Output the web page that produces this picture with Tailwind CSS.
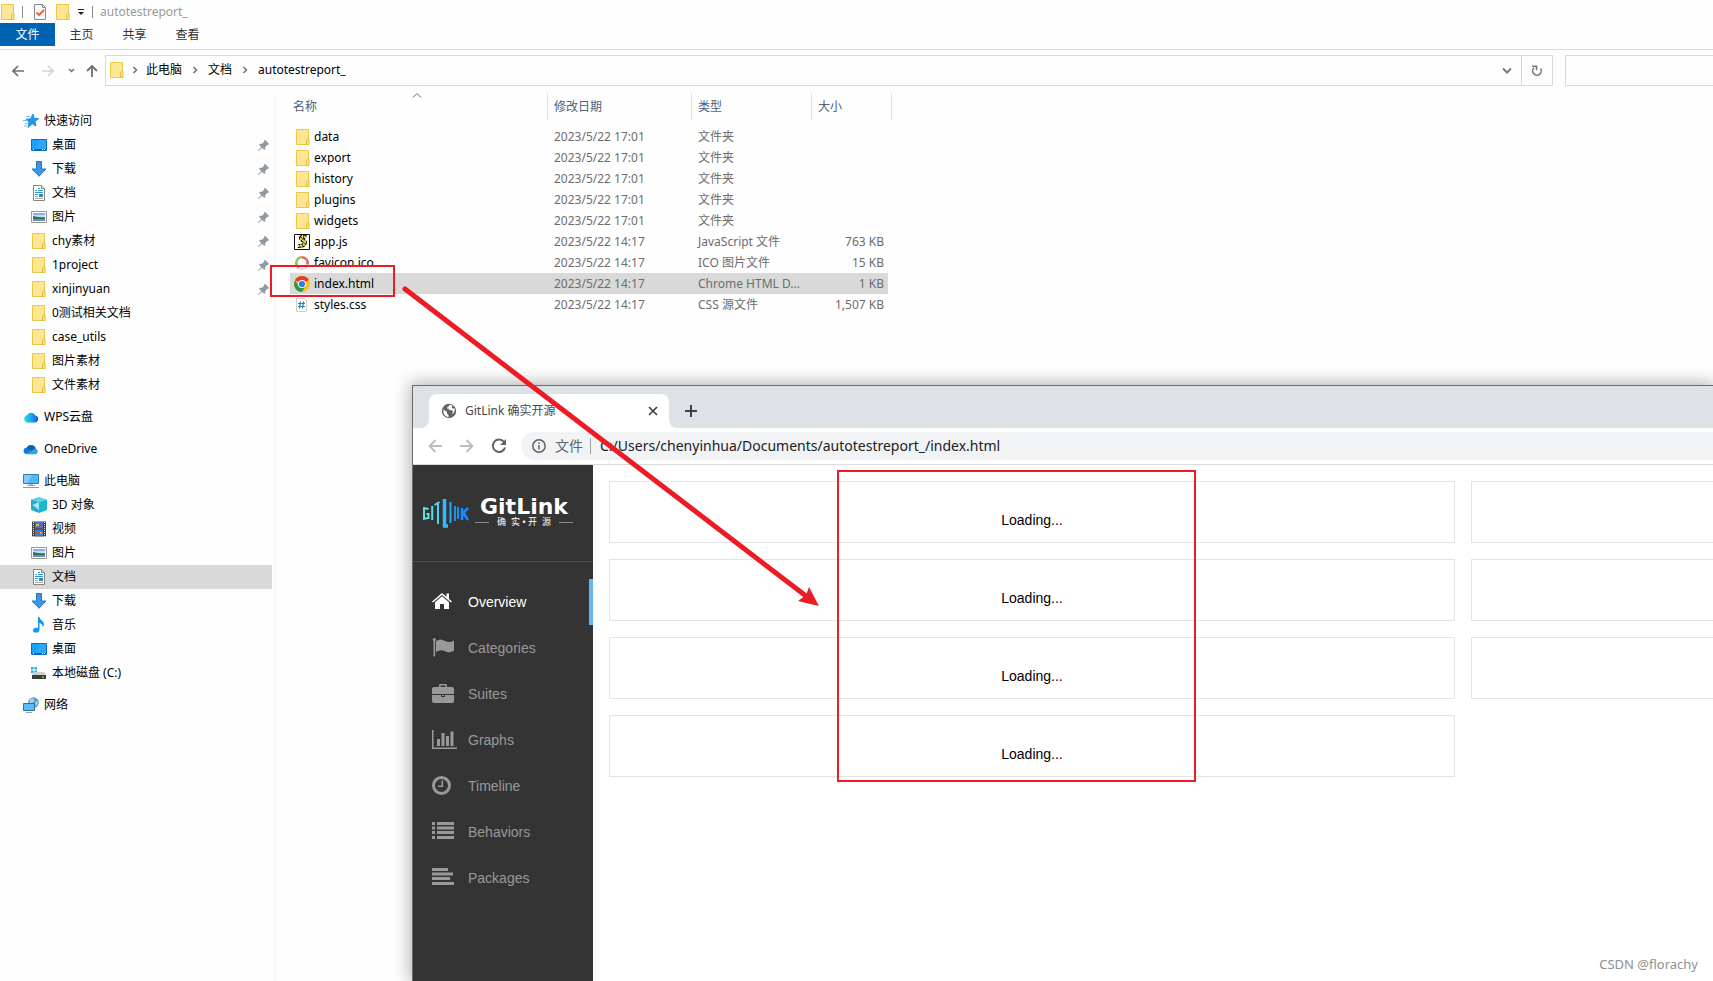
<!DOCTYPE html>
<html lang="zh-CN">
<head>
  <meta charset="UTF-8">
  <meta name="viewport" content="width=device-width, initial-scale=1.0">
  <title>autotestreport_</title>
  <script src="https://cdn.jsdelivr.net/npm/@tailwindcss/browser@4"></script>
</head>
<body class="relative flex h-screen flex-col overflow-hidden bg-[#fefefe] text-xs text-black select-none font-['Noto_Sans','Noto_Sans_CJK_SC',sans-serif]">

  <!-- shared icons -->
  <svg class="hidden">
    <symbol id="i-folder" viewBox="0 0 16 16">
      <path d="M1.500.5h12v15h-12z" fill="#ffe694" stroke="#ecc846"/>
      <path d="M11.500 10.500l1-1h1.500v6h-2.500z" fill="#ffe088" stroke="#e6bf3c"/>
    </symbol>
    <symbol id="i-pin" viewBox="0 0 11 11">
      <path d="M6 0.500L7.300 0l3.500 3.500-.5 1.300-1 .1L7.200 7l.1 2-1 1L4 7.800.6 11 0 10.400 3.200 7 1 4.700l1-1 2 .1 2.100-2.100z" fill="#8f9aa3"/>
    </symbol>
    <symbol id="i-desktop" viewBox="0 0 16 16">
      <path d="M.5 2.500h15v11H.5z" fill="#1ba1fb" stroke="#0c6cb8"/>
      <path d="M9 3h6v9H4z" fill="#33adff" opacity=".6"/>
      <path d="M1 12.500h14" stroke="#0b62a8"/><path d="M2 12.500h1M11 12.500h1M13 12.500h1" stroke="#fff"/>
    </symbol>
    <symbol id="i-down" viewBox="0 0 16 16">
      <path d="M5.500.5h5v7.500h4.500L8 15.300 1 8h4.500z" fill="#3b98e8" stroke="#2279c7"/>
    </symbol>
    <symbol id="i-doc" viewBox="0 0 16 16">
      <path d="M2.500.5h8l3 3v12h-11z" fill="#fff" stroke="#868686"/><path d="M10.500.5v3h3" fill="#ddd" stroke="#868686"/>
      <path d="M4 5.500h2M7 3.500h2M7 5.500h5M4 7.500h8M4 9.500h3" stroke="#2a9cd0"/><path d="M4 11.500h3M4 13.500h8" stroke="#aaa"/>
      <path d="M8 9h4v3H8z" fill="#3a87b5"/>
    </symbol>
    <symbol id="i-pic" viewBox="0 0 16 16">
      <path d="M.5 2.500h15v11H.5z" fill="#fff" stroke="#9a9a9a"/><path d="M2 4h12v8H2z" fill="#7fb4f0"/>
      <path d="M2 6h12v2H2z" fill="#c4def2"/><path d="M2 7l5 1 7 .5V10H2z" fill="#3d6b62"/><path d="M2 10h12v2H2z" fill="#5f94b8"/>
    </symbol>
    <symbol id="i-chev" viewBox="0 0 6 8"><path d="M1.500 1l3 3-3 3" fill="none" stroke="#707070" stroke-width="1.500"/></symbol>
  </svg>

  <!-- title bar -->
  <header>
    <div class="flex h-[23px] items-center text-[#999]">
      <svg class="size-4"><use href="#i-folder"/></svg>
      <span class="ml-[6px] h-3 w-px bg-[#8a8a8a]"></span>
      <button class="ml-[9px]" aria-label="属性"><svg class="size-4" viewBox="0 0 16 16"><path d="M2.500.5h8l3 3v12h-11z" fill="#f7f7f7" stroke="#8a8a8a"/><path d="M10.500.5v3h3" fill="none" stroke="#8a8a8a"/><path d="M4.500 8.500l2.500 2.500 5-5" fill="none" stroke="#e8612c" stroke-width="1.800"/></svg></button>
      <button class="ml-[7px]" aria-label="新建文件夹"><svg class="size-4"><use href="#i-folder"/></svg></button>
      <button class="ml-[6px]" aria-label="自定义"><svg class="h-2 w-2" viewBox="0 0 8 8"><path d="M1 1.500h6" stroke="#222"/><path d="M1 4h6L4 7z" fill="#222"/></svg></button>
      <span class="ml-[7px] h-3 w-px bg-[#8a8a8a]"></span>
      <span class="ml-[7px]">autotestreport_</span>
    </div>
    <nav class="flex h-[27px] items-start border-b border-[#dadada] text-[#333]">
      <button class="h-[23px] w-[55px] bg-[#0063b1] pt-px text-white">文件</button>
      <button class="h-[23px] w-[53px] pt-px">主页</button>
      <button class="h-[23px] w-[53px] pt-px">共享</button>
      <button class="h-[23px] w-[53px] pt-px">查看</button>
    </nav>
  </header>

  <!-- address row -->
  <div class="flex h-9 items-end">
    <div class="flex h-[31px] w-[105px] shrink-0 items-center pl-3">
      <button aria-label="后退"><svg class="h-3 w-3" viewBox="0 0 12 12" fill="none" stroke="#6f6f6f" stroke-width="1.700"><path d="M12 6H1M6 1L1 6l5 5"/></svg></button>
      <button class="ml-[18px]" aria-label="前进"><svg class="h-3 w-3" viewBox="0 0 12 12" fill="none" stroke="#d5d5d5" stroke-width="1.700"><path d="M0 6h11M6 1l5 5-5 5"/></svg></button>
      <button class="ml-[14px]" aria-label="最近"><svg class="h-2 w-[7px]" viewBox="0 0 7 8" fill="none" stroke="#707070" stroke-width="1.400"><path d="M1 2l2.500 2.500L6 2"/></svg></button>
      <button class="ml-[11px]" aria-label="上移"><svg class="h-3 w-3" viewBox="0 0 12 12" fill="none" stroke="#6f6f6f" stroke-width="1.800"><path d="M6 12V1M1 6l5-5 5 5"/></svg></button>
    </div>
    <div class="flex h-[31px] w-[1448px] shrink border border-[#d9d9d9]">
      <div class="flex flex-1 items-center pb-px pl-[3px]">
        <svg class="size-4"><use href="#i-folder"/></svg>
        <svg class="ml-[7px] h-2 w-[6px]"><use href="#i-chev"/></svg>
        <a href="#" class="ml-2">此电脑</a>
        <svg class="ml-[10px] h-2 w-[6px]"><use href="#i-chev"/></svg>
        <a href="#" class="ml-[10px]">文档</a>
        <svg class="ml-[10px] h-2 w-[6px]"><use href="#i-chev"/></svg>
        <a href="#" class="ml-[10px]">autotestreport_</a>
        <button class="mr-[9px] ml-auto" aria-label="展开"><svg class="h-[7px] w-[10px]" viewBox="0 0 10 7" fill="none" stroke="#7a7a7a" stroke-width="2"><path d="M1 1.500l4 4 4-4"/></svg></button>
      </div>
      <button class="flex w-[31px] items-center justify-center border-l border-[#d9d9d9]" aria-label="刷新"><svg class="h-3 w-3" viewBox="0 0 12 12" fill="none" stroke="#7a7a7a" stroke-width="1.600"><path d="M3 2.800a4.300 4.300 0 1 0 6.500.6M1 1.200h4.600v4"/></svg></button>
    </div>
    <input type="text" aria-label="搜索" class="ml-3 h-[31px] min-w-0 flex-1 border border-r-0 border-[#d9d9d9]">
  </div>

  <div class="flex min-h-0 flex-1 pt-[7px]">
    <!-- navigation pane -->
    <aside class="w-[275px] shrink-0 border-r border-[#f4f4f4] pt-4 pr-[2px] [&_a]:flex [&_a]:h-6 [&_a]:items-center [&_a]:gap-[5px] [&_a]:pr-[3px] [&_svg]:size-4">
      <a href="#" class="pl-[23px]"><svg viewBox="0 0 16 16"><path d="M10 1l1.200 4.300 4.500.3-3.700 2.900 1 4.600-3.700-2.300L5 14.500l1-5L3 6.300l4.700-.6z" fill="#2494e6" stroke="#2494e6"/><path d="M3 3.500h4M0 7.500h5M2 10.500h3M1 13h3" stroke="#6dbcf3"/></svg>快速访问</a>
      <a href="#" class="pl-[31px]"><svg><use href="#i-desktop"/></svg>桌面<svg class="ml-auto size-[11px]!"><use href="#i-pin"/></svg></a>
      <a href="#" class="pl-[31px]"><svg><use href="#i-down"/></svg>下载<svg class="ml-auto size-[11px]!"><use href="#i-pin"/></svg></a>
      <a href="#" class="pl-[31px]"><svg><use href="#i-doc"/></svg>文档<svg class="ml-auto size-[11px]!"><use href="#i-pin"/></svg></a>
      <a href="#" class="pl-[31px]"><svg><use href="#i-pic"/></svg>图片<svg class="ml-auto size-[11px]!"><use href="#i-pin"/></svg></a>
      <a href="#" class="pl-[31px]"><svg><use href="#i-folder"/></svg>chy素材<svg class="ml-auto size-[11px]!"><use href="#i-pin"/></svg></a>
      <a href="#" class="pl-[31px]"><svg><use href="#i-folder"/></svg>1project<svg class="ml-auto size-[11px]!"><use href="#i-pin"/></svg></a>
      <a href="#" class="pl-[31px]"><svg><use href="#i-folder"/></svg>xinjinyuan<svg class="ml-auto size-[11px]!"><use href="#i-pin"/></svg></a>
      <a href="#" class="pl-[31px]"><svg><use href="#i-folder"/></svg>0测试相关文档</a>
      <a href="#" class="pl-[31px]"><svg><use href="#i-folder"/></svg>case_utils</a>
      <a href="#" class="pl-[31px]"><svg><use href="#i-folder"/></svg>图片素材</a>
      <a href="#" class="pl-[31px]"><svg><use href="#i-folder"/></svg>文件素材</a>
      <a href="#" class="mt-2 pl-[23px]"><svg viewBox="0 0 16 16"><defs><linearGradient id="wps"><stop offset="0" stop-color="#35e0c8"/><stop offset=".5" stop-color="#1aa5f5"/><stop offset="1" stop-color="#1658e0"/></linearGradient></defs><path d="M4.500 13.500a3.700 3.700 0 0 1-.7-7.200 4.800 4.800 0 0 1 8.600.3 3.500 3.500 0 0 1-.4 6.900z" fill="url(#wps)"/></svg>WPS云盘</a>
      <a href="#" class="mt-2 pl-[23px]"><svg viewBox="0 0 16 16"><path d="M3.500 7a5 5 0 0 1 9.300.6L8 11z" fill="#0f5fb5"/><path d="M3 13a3.200 3.200 0 0 1 .6-6.300L11 11z" fill="#1279d4"/><path d="M3 13.200L12.500 7.500a3 3 0 0 1 .5 5.700z" fill="#28a8ea"/></svg>OneDrive</a>
      <a href="#" class="mt-2 pl-[23px]"><svg viewBox="0 0 16 16"><path d="M.5 1.500h15v9H.5z" fill="#4fb8f8" stroke="#3a7ca8"/><path d="M1 2h8l-5 8H1z" fill="#84cdfb"/><path d="M6 11.500h4M4 12.500h8" stroke="#9fb0bd"/><path d="M0 14.500h16" stroke="#8b9aa5"/></svg>此电脑</a>
      <a href="#" class="pl-[31px]"><svg viewBox="0 0 16 16"><path d="M8 0l8 2.500L8 5 0 2.500z" fill="#5cd4e6"/><path d="M0 2.500L8 5v11l-8-3z" fill="#2fa9c4"/><path d="M16 2.500L8 5v11l8-3z" fill="#18b6cf"/><path d="M1.500 8L8 5v8z" fill="#a6e6ef"/></svg>3D 对象</a>
      <a href="#" class="pl-[31px]"><svg viewBox="0 0 16 16"><path d="M1 .5h14v15H1z" fill="#3f3f3f"/><path d="M4 1h8v6.500H4zM4 8.500h8V15H4z" fill="#4577c8"/><path d="M5 3h3v2H5zM9 11h2v2H9z" fill="#e0b23a"/><path d="M8 4h3v2H8zM5 10h3v2H5z" fill="#c8503c"/><path d="M2.500 1v15M13.500 1v15" stroke="#eee" stroke-dasharray="1 1"/></svg>视频</a>
      <a href="#" class="pl-[31px]"><svg><use href="#i-pic"/></svg>图片</a>
      <a href="#" class="bg-[#d9d9d9] pl-[31px]"><svg><use href="#i-doc"/></svg>文档</a>
      <a href="#" class="pl-[31px]"><svg><use href="#i-down"/></svg>下载</a>
      <a href="#" class="pl-[31px]"><svg viewBox="0 0 16 16"><path d="M7 0h1.500c.3 3 4.500 3.800 4.500 7 0 1.500-.8 2.800-1.500 3.500C12 7.500 10.500 6.800 8.500 6v6.500c0 4-6.500 4.300-6.500 1 0-2.300 3-3.300 5-2.300z" fill="#0f97f5"/></svg>音乐</a>
      <a href="#" class="pl-[31px]"><svg><use href="#i-desktop"/></svg>桌面</a>
      <a href="#" class="pl-[31px]"><svg viewBox="0 0 16 16"><path d="M0 2h2.500v2.500H0zM3.500 2H6v2.500H3.500zM0 5.500h2.500V8H0zM3.500 5.500H6V8H3.500z" fill="#19b5e8"/><path d="M3 7h10l2 3H1z" fill="#cfcfcf"/><path d="M1 10h14v4H1z" fill="#3d3d3d"/><path d="M11 12h2" stroke="#4fe04f" stroke-width="1.500"/></svg>本地磁盘 (C:)</a>
      <a href="#" class="mt-2 pl-[23px]"><svg viewBox="0 0 16 16"><circle cx="10.500" cy="5.500" r="5.300" fill="#5b9cc0"/><path d="M7 3c2-3 5-1 4 1s-3 2-2 4-3-1-2-5zM13 4l2 1-1 4-2-2z" fill="#a9d3e6"/><path d="M.5 6.500h11v7H.5z" fill="#5cbcf7" stroke="#2f6fa0"/><path d="M3 15.500h6" stroke="#8ba3b3"/></svg>网络</a>
    </aside>

    <!-- file list -->
    <main class="pl-[15px]">
      <table class="relative w-[602px] table-fixed border-separate border-spacing-0 text-left text-[#6d6d6d] [&_tbody_tr]:h-[21px] [&_td]:p-0 [&_td]:leading-[21px] [&_td]:whitespace-nowrap [&_td:nth-child(n+2)]:pl-[6px] [&_td:nth-child(4)]:border-r-[4px] [&_td:nth-child(4)]:border-transparent [&_td:nth-child(4)]:bg-clip-padding [&_td:nth-child(4)]:pr-1 [&_td:nth-child(4)]:text-right [&_td>div]:flex [&_td>div]:items-center [&_td>div]:gap-1 [&_td>div]:pl-1 [&_td>div]:text-black [&_td_svg]:size-4">
        <colgroup><col class="w-[258px]"><col class="w-36"><col class="w-[120px]"><col class="w-20"></colgroup>
        <thead>
          <tr class="h-[27px] text-[#4c607a] [&_th]:border-r [&_th]:border-[#e3e3e3] [&_th]:p-0 [&_th]:pl-[6px] [&_th]:font-normal">
            <th class="pl-[3px]!">名称<svg class="absolute top-0 left-[122px] h-[5px] w-[10px]" viewBox="0 0 10 5" fill="none" stroke="#666"><path d="M1 4.500l4-4 4 4"/></svg></th>
            <th>修改日期</th><th>类型</th><th>大小</th>
          </tr>
          <tr class="h-[6px]"><td colspan="4" class="h-[6px] border-0! leading-[0]!"></td></tr>
        </thead>
        <tbody>
          <tr><td><div><svg viewBox="0 0 16 16"><use href="#i-folder" x="1" width="16" height="16"/></svg>data</div></td><td>2023/5/22 17:01</td><td>文件夹</td><td></td></tr>
          <tr><td><div><svg viewBox="0 0 16 16"><use href="#i-folder" x="1" width="16" height="16"/></svg>export</div></td><td>2023/5/22 17:01</td><td>文件夹</td><td></td></tr>
          <tr><td><div><svg viewBox="0 0 16 16"><use href="#i-folder" x="1" width="16" height="16"/></svg>history</div></td><td>2023/5/22 17:01</td><td>文件夹</td><td></td></tr>
          <tr><td><div><svg viewBox="0 0 16 16"><use href="#i-folder" x="1" width="16" height="16"/></svg>plugins</div></td><td>2023/5/22 17:01</td><td>文件夹</td><td></td></tr>
          <tr><td><div><svg viewBox="0 0 16 16"><use href="#i-folder" x="1" width="16" height="16"/></svg>widgets</div></td><td>2023/5/22 17:01</td><td>文件夹</td><td></td></tr>
          <tr><td><div><svg viewBox="0 0 16 16"><path d="M.5.5h15v15H.5z" fill="#fff" stroke="#111"/><path d="M12 3.500c-2-1.500-5-1-5 .8s4 2 4 4.200-3.500 4-7 3.500" fill="none" stroke="#111" stroke-width="4" stroke-dasharray="3 .6"/><path d="M12 3.500c-2-1.500-5-1-5 .8s4 2 4 4.200-3.500 4-7 3.500" fill="none" stroke="#f0e23c" stroke-width="2" stroke-dasharray="2 .7"/></svg>app.js</div></td><td>2023/5/22 14:17</td><td>JavaScript 文件</td><td>763 KB</td></tr>
          <tr><td><div><svg viewBox="0 0 16 16" fill="none" stroke-width="2.600"><path d="M8 2.300a5.700 5.700 0 0 0-3 10.500" stroke="#8cc665"/><path d="M8 2.300a5.700 5.700 0 0 1 4.500 2.200" stroke="#f0643c"/><path d="M12.500 4.500a5.700 5.700 0 0 1 1 5" stroke="#c864a0"/><path d="M13.500 9.500a5.700 5.700 0 0 1-2 3" stroke="#f5c83c"/><path d="M11.500 12.500a5.700 5.700 0 0 1-6.500.3" stroke="#e0e0e0"/></svg>favicon.ico</div></td><td>2023/5/22 14:17</td><td>ICO 图片文件</td><td>15 KB</td></tr>
          <tr class="[&_td]:bg-[#d9d9d9]"><td><div><svg viewBox="0 0 16 16"><circle cx="8" cy="8" r="8" fill="#fbc116"/><path d="M8 8L1.100 4A8 8 0 0 1 14.900 4z" fill="#e33b2e"/><path d="M1.100 4A8 8 0 0 0 8 16l3.500-6L8 8 4.500 10z" fill="#2a9c48"/><circle cx="8" cy="8" r="4" fill="#fff"/><circle cx="8" cy="8" r="3.100" fill="#2f7de9"/></svg>index.html</div></td><td>2023/5/22 14:17</td><td>Chrome HTML D...</td><td>1 KB</td></tr>
          <tr><td><div><svg viewBox="0 0 16 16"><path d="M2.500 1.500h8l2 2v11h-10z" fill="#fff" stroke="#cfcfcf"/><path d="M6.500 4.500l-1 7M9.500 4.500l-1 7M4 6.500h7M4 9.500h7" stroke="#2f7f9f" stroke-width="1.200"/></svg>styles.css</div></td><td>2023/5/22 14:17</td><td>CSS 源文件</td><td>1,507 KB</td></tr>
        </tbody>
      </table>
    </main>
  </div>

  <!-- browser window over the explorer -->
  <section class="absolute top-[385px] right-0 bottom-0 left-[412px] flex flex-col border-t border-l border-[#6b6b6b] bg-white shadow-[0_0_16px_2px_rgba(0,0,0,0.3)]">
    <div class="flex h-[42px] shrink-0 items-end bg-[#dee1e6] pl-2">
      <svg class="size-2" viewBox="0 0 8 8"><path d="M8 0v8H0a8 8 0 0 0 8-8z" fill="#fff"/></svg>
      <div class="flex h-[34px] w-60 items-center rounded-t-lg bg-white pr-[11px] pl-3 text-[#45494d]">
        <svg class="size-4" viewBox="0 0 16 16"><circle cx="8" cy="8" r="7.200" fill="#5f6368"/><path d="M2.500 6.500L6 9v1.500l1.500 1.500v2.300A6 6 0 0 1 2.500 6.500zM8.500 1.800c0 2-2.300 1.400-2.300 3.200 0 1 1.800 0 1.800 1.500s3.500.2 3.800 1.700-.6 1-.5 3c2-1.500 3-4 2.300-6-1.500.5-2.800.2-2.800-1s1-1 .5-1.800a6 6 0 0 0-2.800-.6z" fill="#fff"/></svg>
        <span class="ml-2">GitLink 确实开源</span>
        <button class="ml-auto" aria-label="关闭标签页"><svg class="size-[10px]" viewBox="0 0 10 10" stroke="#3c4043" stroke-width="1.700"><path d="M1 1l8 8M9 1L1 9"/></svg></button>
      </div>
      <svg class="size-2" viewBox="0 0 8 8"><path d="M0 0v8h8a8 8 0 0 1-8-8z" fill="#fff"/></svg>
      <button class="mb-[11px] ml-2" aria-label="新标签页"><svg class="size-3" viewBox="0 0 12 12" stroke="#3c4043" stroke-width="2"><path d="M6 0v12M0 6h12"/></svg></button>
    </div>
    <div class="flex h-[37px] shrink-0 items-center border-b border-[#dadada] pl-[15px]">
      <button aria-label="返回"><svg class="size-[14px]" viewBox="0 0 14 14" fill="none" stroke="#babcbe" stroke-width="1.800"><path d="M14 7H1.500M7.500 1l-6 6 6 6"/></svg></button>
      <button class="ml-[18px]" aria-label="前进"><svg class="size-[14px]" viewBox="0 0 14 14" fill="none" stroke="#babcbe" stroke-width="1.800"><path d="M0 7h12.500M6.500 1l6 6-6 6"/></svg></button>
      <button class="ml-[17px]" aria-label="重新加载"><svg class="size-4" viewBox="0 0 16 16"><path d="M13 4A6.200 6.200 0 1 0 14 9.500" fill="none" stroke="#5f6368" stroke-width="2"/><path d="M15 1v6H9z" fill="#5f6368"/></svg></button>
      <div class="ml-[14px] flex h-7 flex-1 items-center rounded-l-full bg-[#f1f3f4] pl-[11px] text-sm text-[#5f6368]">
        <svg class="size-[14px]" viewBox="0 0 14 14" fill="none" stroke="#5f6368" stroke-width="1.500"><circle cx="7" cy="7" r="6.200"/><path d="M7 6v4.500M7 3.500V5"/></svg>
        <span class="ml-[9px]">文件</span>
        <span class="mx-[7px] h-4 w-px bg-[#9aa0a6]"></span>
        <input type="text" aria-label="地址" value="C:/Users/chenyinhua/Documents/autotestreport_/index.html" class="h-7 flex-1 bg-transparent pb-px pl-[2px] text-[#202124] outline-none">
      </div>
    </div>

    <div class="flex min-h-0 flex-1 overflow-hidden font-['Liberation_Sans','Noto_Sans_CJK_SC',sans-serif] text-sm">
      <aside class="w-[180px] shrink-0 bg-[#343434] text-[#999]">
        <div class="flex h-[97px] items-center gap-[6px] border-b border-[#4d4d4d] pl-[10px]">
          <svg class="h-[30px] w-[46px]" viewBox="0 0 46 30" fill="none" stroke-width="2">
            <path d="M5.500 11L1 10v11l4.500-1v-4H3.500" stroke="#5ff0f0" stroke-width="1.800"/>
            <path d="M9.200 8v14" stroke="#54dff0" stroke-width="2"/>
            <path d="M11.500 7l5-3M15 4v22" stroke="#4fd0f4" stroke-width="2"/>
            <path d="M21.500 1v27h3.500" stroke="#35b8fa" stroke-width="3.500"/>
            <path d="M27.500 4v21" stroke="#2aa8fb"/>
            <path d="M32 23V8M35 9v12" stroke="#2199fb" stroke-width="1.800"/>
            <path d="M39 10v12M45 10l-4.500 5 4.500 7" stroke="#168bff" stroke-width="2.600"/>
          </svg>
          <div class="flex w-[98px] flex-col items-center text-white">
            <span class="font-['DejaVu_Sans',sans-serif] text-[22px] leading-[18px] font-bold">GitLink</span>
            <span class="flex w-full items-center justify-between text-[9px] leading-[12px]"><i class="h-px w-[14px] bg-[#888]"></i>确&nbsp; 实 • 开&nbsp; 源<i class="h-px w-[14px] bg-[#888]"></i></span>
          </div>
        </div>
        <nav class="pt-[17px] [&_a]:flex [&_a]:h-[46px] [&_a]:items-center [&_a]:pl-[19px] [&_svg]:mr-[11px] [&_svg]:h-5 [&_svg]:w-[25px] [&_svg]:fill-current">
          <a href="#" class="border-r-4 border-[#64b5f6] text-white"><svg viewBox="0 0 25 20"><path d="M10 1L0 9.500l1 1L10 3l9 7.500 1-1-3-2.600V1.500h-2.500v3.200z"/><path d="M10 4.200l-7 6V17h5v-5h4v5h5v-6.800z"/></svg>Overview</a>
          <a href="#"><svg viewBox="0 0 25 20"><path d="M1.500 1.500h1.700v17H1.500z"/><circle cx="2.300" cy="1.500" r="1.500"/><path d="M4 3c3-2 6-2 9 0s6 1 9-.5v10c-3 2-6 2.500-9 .7s-6-1-9 .8z"/></svg>Categories</a>
          <a href="#"><svg viewBox="0 0 25 20"><path d="M7 3V1.500Q7 0 8 0h6q1 0 1 1.500V3h5q2 0 2 2v5H0V5q0-2 2-2zM8.500 1.500V3h5V1.500zM0 11h9v2h4v-2h9v6q0 2-2 2H2q-2 0-2-2zM10 11h2v1h-2z" fill-rule="evenodd"/></svg>Suites</a>
          <a href="#"><svg viewBox="0 0 25 20"><path d="M0 0h1.500v17.500H25V19H0zM5 9h3v7H5zM9.500 3h3v13h-3zM14 6h3v10h-3zM18.500 1.500h3V16h-3z"/></svg>Graphs</a>
          <a href="#"><svg viewBox="0 0 25 20"><circle cx="9.500" cy="9.500" r="8" fill="none" stroke="currentColor" stroke-width="3"/><path d="M9.500 4.500h1.600v6.600H6V9.500h3.500z"/></svg>Timeline</a>
          <a href="#"><svg viewBox="0 0 25 20"><path d="M0 0h3v3H0zM5 0h17v3H5zM0 4.500h3v3H0zM5 4.500h17v3H5zM0 9h3v3H0zM5 9h17v3H5zM0 14h3v3H0zM5 14h17v3H5z"/></svg>Behaviors</a>
          <a href="#"><svg viewBox="0 0 25 20"><path d="M0 0h16v3H0zM0 4.500h21v3H0zM0 9h18v3H0zM0 14h22v3H0z"/></svg>Packages</a>
        </nav>
      </aside>
      <!-- second column is still empty and scrolls off to the right -->
      <div class="grid min-w-0 flex-1 grid-cols-[846px_846px] content-start gap-4 overflow-hidden p-4 text-center [&>div]:h-[62px] [&>div]:border [&>div]:border-[#e4e4e4] [&>div]:pt-7">
        <div>Loading...</div><div></div>
        <div>Loading...</div><div></div>
        <div>Loading...</div><div></div>
        <div>Loading...</div>
      </div>
    </div>
  </section>

  <!-- red annotations -->
  <div class="absolute top-[265px] left-[270px] h-8 w-[125px] border-2 border-[#ed1c24]"></div>
  <div class="absolute top-[470px] left-[837px] h-[312px] w-[359px] border-2 border-[#ed1c24]"></div>
  <svg class="pointer-events-none absolute top-0 left-0 h-full w-full">
    <path d="M405 289L806 596" stroke="#ed1c24" stroke-width="5" stroke-linecap="round"/>
    <path d="M819 606L809 587 806 595 798 601z" fill="#ed1c24"/>
  </svg>
  <span class="absolute right-[15px] bottom-2 text-[13px] text-[#8f8f8f]">CSDN @florachy</span>
</body>
</html>
